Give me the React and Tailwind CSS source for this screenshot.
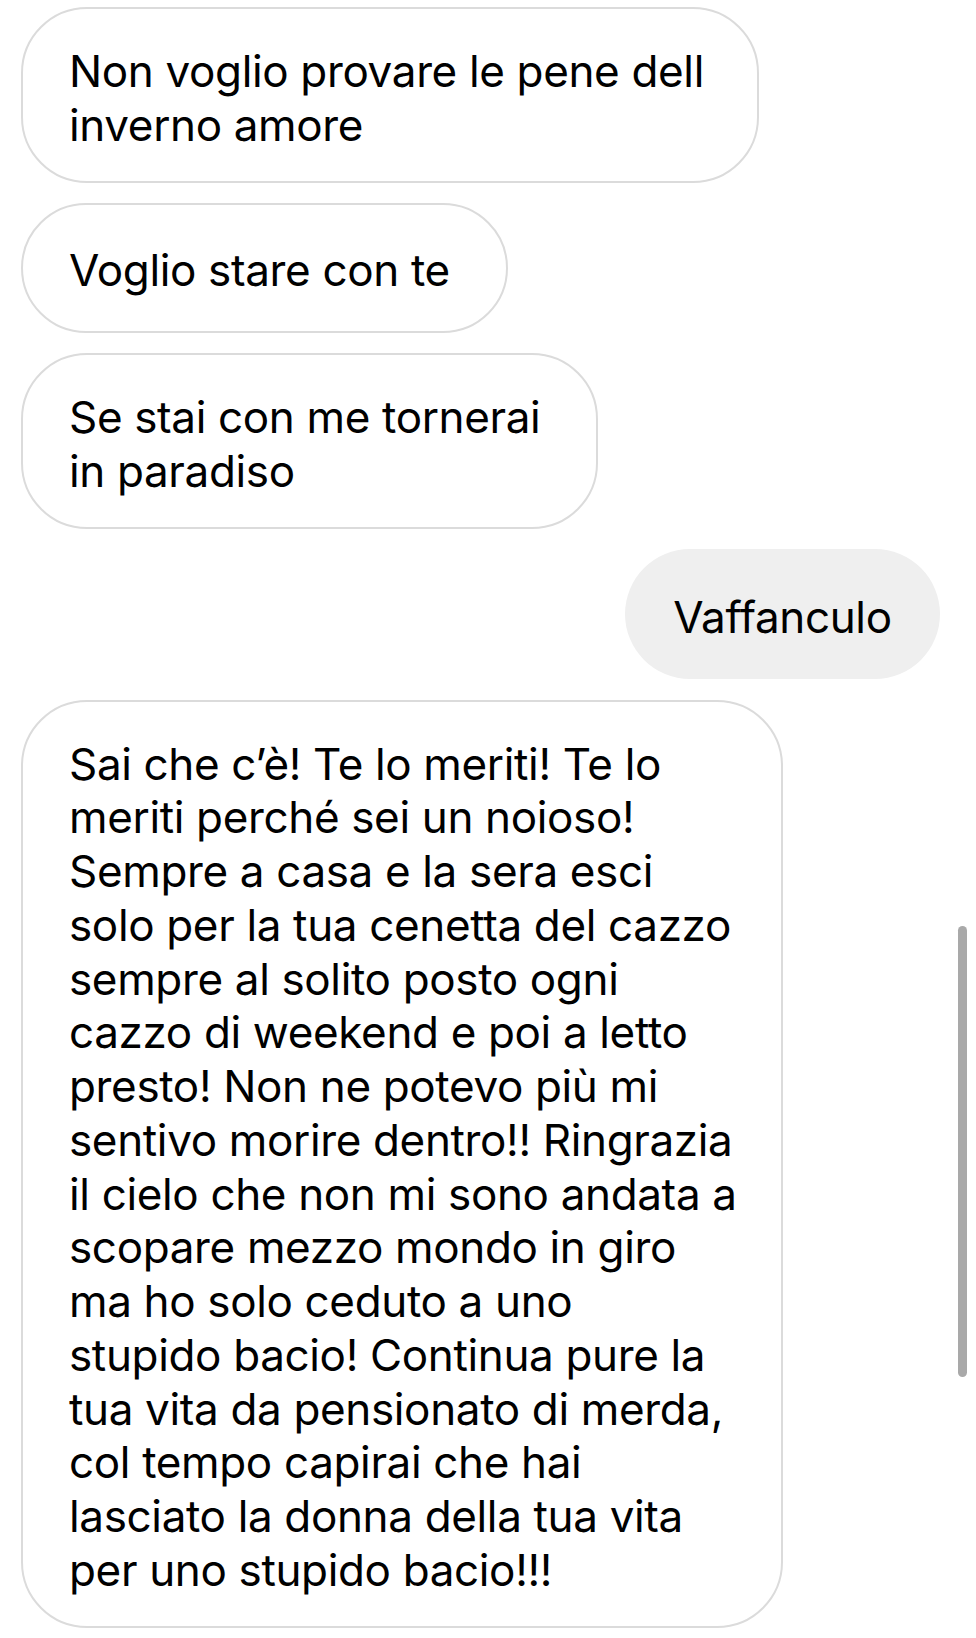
import React from 'react';

const messages = [
    { id: 1, mine: false, width: 'w-[738px]', single: false, lines: ['Non voglio provare le pene dell', 'inverno amore'] },
    { id: 2, mine: false, width: 'w-[487px]', single: true, lines: ['Voglio stare con te'] },
    { id: 3, mine: false, width: 'w-[577px]', single: false, lines: ['Se stai con me tornerai', 'in paradiso'] },
    { id: 4, mine: true, width: 'w-[315px]', single: true, lines: ['Vaffanculo'] },
    {
        id: 5, mine: false, width: 'w-[762px]', single: false, lines: [
            'Sai che c’è! Te lo meriti! Te lo',
            'meriti perché sei un noioso!',
            'Sempre a casa e la sera esci',
            'solo per la tua cenetta del cazzo',
            'sempre al solito posto ogni',
            'cazzo di weekend e poi a letto',
            'presto! Non ne potevo più mi',
            'sentivo morire dentro!! Ringrazia',
            'il cielo che non mi sono andata a',
            'scopare mezzo mondo in giro',
            'ma ho solo ceduto a uno',
            'stupido bacio! Continua pure la',
            'tua vita da pensionato di merda,',
            'col tempo capirai che hai',
            'lasciato la donna della tua vita',
            'per uno stupido bacio!!!',
        ]
    },
];

const Bubble = ({ msg }) => {
    const base = `${msg.width} rounded-[66px] text-[44px] leading-[53.75px] tracking-[-0.35px] text-black`;
    if (msg.mine) {
        return (
            <div className="flex justify-end">
                <div className={`${base} h-[130px] pt-[8px] bg-[#efefef] flex items-center justify-center`}>
                    <span className="whitespace-nowrap">{msg.lines[0]}</span>
                </div>
            </div>
        );
    }
    return (
        <div className="flex justify-start">
            <div className={`${base} border-2 border-[#dbdbdb] bg-white pl-[46px] ${msg.single ? 'h-[129.5px] pt-[7px] flex items-center' : 'pt-[36px] pb-[28px]'}`}>
                <div>
                    {msg.lines.map((line, i) => (
                        <div key={i} className="whitespace-nowrap">{line}</div>
                    ))}
                </div>
            </div>
        </div>
    );
};

export default function App() {
    return (
        <div className="relative w-[976px] h-[1638px] overflow-hidden bg-white font-['Inter','Noto_Sans',sans-serif]">
            <div className="flex flex-col gap-[20.5px] pt-[7px] pl-[21px] pr-[36px]">
                {messages.map(m => <Bubble key={m.id} msg={m} />)}
            </div>
            {/* scroll indicator */}
            <div className="absolute left-[958px] top-[926px] w-[9px] h-[451px] rounded-full bg-[#a9a9a9]" />
        </div>
    );
}
